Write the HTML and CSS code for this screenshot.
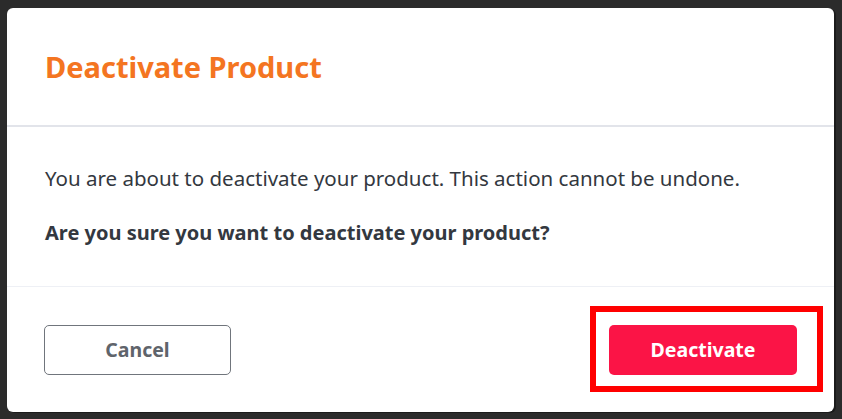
FILE: index.html
```html
<!DOCTYPE html>
<html lang="en">
<head>
<meta charset="utf-8">
<title>Deactivate Product</title>
<link rel="stylesheet" href="styles.css">
</head>
<body>
<div class="dialog">
  <div class="dialog-header">
    <h2 class="dialog-title">Deactivate Product</h2>
  </div>
  <div class="dialog-body">
    <p class="msg">You are about to deactivate your product. This action cannot be undone.</p>
    <p class="msg msg-strong">Are you sure you want to deactivate your product?</p>
  </div>
  <div class="dialog-footer">
    <button class="btn btn-cancel">Cancel</button>
    <div class="highlight">
      <button class="btn btn-danger">Deactivate</button>
    </div>
  </div>
</div>
</body>
</html>
```
FILE: styles.css
```css
html, body {
  margin: 0;
  padding: 0;
  background: #2b2b2b;
}
body {
  padding: 8px 0 0 7px;
  height: 419px;
  box-sizing: border-box;
  font-family: "Noto Sans", "Open Sans", sans-serif;
}
.dialog {
  width: 827px;
  height: 404px;
  background: #ffffff;
  border-radius: 6px;
  box-shadow: 2px 1px 0 #1b1b1b;
  display: flex;
  flex-direction: column;
}
.dialog-header {
  height: 117px;
  border-bottom: 2px solid #e2e4ea;
  display: flex;
  align-items: center;
  padding-left: 38px;
  box-sizing: content-box;
}
.dialog-title {
  margin: 0;
  font-size: 29px;
  font-weight: 700;
  color: #f47521;
  line-height: 36px;
}
.dialog-body {
  height: 160px;
  border-bottom: 1px solid #eef0f5;
  padding: 0 38px;
  box-sizing: border-box;
  padding-top: 36px;
}
.msg {
  margin: 0;
  font-size: 20.5px;
  line-height: 30px;
  color: #333840;
}
.msg-strong {
  font-size: 20px;
  font-weight: 700;
  margin-top: 25px;
}
.dialog-footer {
  flex: 1;
  display: flex;
  align-items: center;
  justify-content: space-between;
  padding: 0 37px;
}
.btn {
  width: 187px;
  height: 50px;
  border-radius: 5px;
  font-family: "Noto Sans", "Open Sans", sans-serif;
  font-size: 19.5px;
  font-weight: 700;
  cursor: pointer;
}
.btn-cancel {
  background: #ffffff;
  border: 1px solid #70757c;
  color: #5f646b;
}
.btn-danger {
  width: 188px;
  background: #fb1446;
  border: none;
  color: #ffffff;
}
.highlight {
  position: relative;
  display: flex;
}
.highlight::after {
  content: "";
  position: absolute;
  left: -19px;
  right: -26px;
  top: -19px;
  bottom: -17px;
  border: 6px solid #ff0000;
  pointer-events: none;
}
```
